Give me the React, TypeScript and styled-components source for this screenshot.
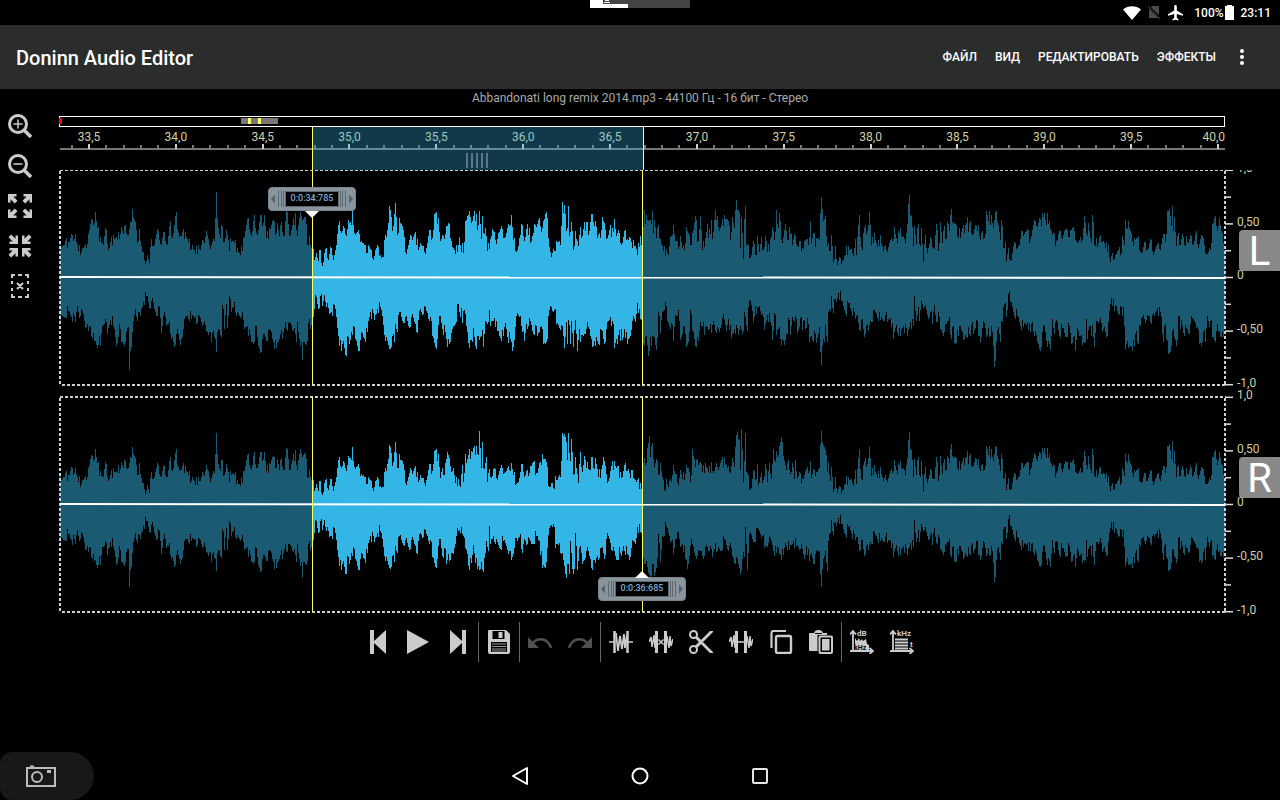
import React from "react";
import styled, { createGlobalStyle } from "styled-components";

const GlobalStyle = createGlobalStyle`
  * { box-sizing: border-box; }
  body { margin: 0; background: #000; font-family: Roboto, "Noto Sans", sans-serif; color: #fff; }
  button { font: inherit; color: inherit; background: none; border: 0; padding: 0; margin: 0; cursor: pointer; }
`;

/* Recorded levels: "position:level" pairs, three units per column, 337 is silence. */
const ZERO = 337;
const UNIT = 3;
const WIDTH = 1166;

type Point = [number, number];

/* Three consecutive stretches of the visible time range. */
const PART_STARTS = [0, 1140, 2310];

const LEFT_TOP = [
  "0:230 12:240 24:232 36:210 45:208 55:258 66:250 78:250 84:208 92:178 97:165 101:182 105:142 112:190 120:218 130:240 138:195 146:255 160:210 172:225 184:188 190:208 196:182 205:210 213:172 217:132 226:172 232:235 237:192 247:262 254:285 262:270 268:296 274:222 282:240 295:198 303:242 313:202 322:242 331:170 337:220 349:142 355:205 364:215 376:202 385:232 397:240 406:268 415:240 421:255 430:230 439:198 447:242 460:220 466:248 467:160 469:82 472:160 480:220 484:180 493:233 499:195 508:260 512:220 523:235 532:250 541:272 550:220 565:160 575:215 583:150 592:210 602:150 606:185 612:150 620:220 628:190 640:165 646:210 652:175 658:215 664:172 672:215 679:138 685:178 690:215 695:195 706:145 711:215 718:160 725:155 737:157 742:240 747:215 753:250 758:270 768:265 775:290 780:255 788:305 795:252 803:280 812:248 818:272 828:240 838:170 846:200 850:185 856:208 865:165 873:180 878:135 883:205 898:208 905:230 912:240 918:265 926:240 937:280 947:255 956:248 962:272 970:278 975:210 983:195 989:125 997:200 1006:115 1012:210 1018:160 1028:185 1036:262 1045:240 1054:215 1065:202 1070:240 1081:235 1092:262 1098:250 1110:195 1117:220 1124:147 1134:160 1142:228 1150:215",
  "20:185 28:178 35:230 46:268 58:218 64:262 67:235 70:265 76:170 85:150 91:158 97:170 103:138 107:170 109:148 113:196 118:138 124:222 127:155 132:208 137:190 143:258 150:222 157:192 167:225 175:205 187:192 194:220 200:205 208:185 214:152 220:225 233:255 240:210 247:180 254:230 260:192 268:190 272:235 280:205 287:180 298:160 302:185 310:170 319:143 326:220 334:278 342:260 350:228 360:240 367:113 370:145 373:122 380:200 385:125 389:215 394:172 401:255 405:200 416:245 421:188 426:215 433:172 437:198 442:172 446:210 454:147 460:172 467:168 473:220 480:220 487:157 496:195 504:210 511:180 515:218 523:162 529:215 538:205 545:240 556:195 562:222 568:218 573:232 580:225 587:245 592:272 600:215 607:250 613:135 616:178 619:150 626:168 634:178 637:138 641:205 644:165 649:220 655:182 660:222 671:260 680:252 685:270 693:215 700:182 706:230 715:252 721:215 727:250 733:255 739:187 746:205 751:242 757:205 767:153 773:232 781:155 788:255 795:220 802:178 806:220 814:165 818:222 826:135 829:165 832:155 838:198 845:180 854:152 865:170 871:225 877:158 883:190 889:105 895:135 898:145 901:250 904:157 910:282 913:162 916:123 920:245 925:240 931:280 940:228 947:270 953:215 959:262 964:218 970:255 977:215 983:262 992:222 997:188 1003:225 1009:135 1014:190 1018:145 1025:225 1036:178 1041:225 1048:188 1053:205 1057:240 1066:215 1075:248 1080:228 1088:250 1094:228 1105:240 1111:170 1115:235 1123:205 1126:248 1130:220 1138:225 1144:98 1147:132 1150:170 1157:155 1160:215 1165:235",
  "0:258 4:212 10:295 15:245 22:300 32:280 38:290 45:270 55:245 68:265 75:222 79:270 83:218 88:150 91:218 97:255 101:205 107:180 112:200 118:142 125:240 133:205 139:235 141:208 143:248 151:210 160:258 170:255 177:235 187:230 193:188 201:235 207:205 211:190 215:215 222:222 230:205 235:118 238:90 242:150 246:188 250:245 253:185 259:238 264:178 270:245 274:190 280:293 286:212 292:265 298:238 304:222 313:252 319:178 326:258 331:172 337:235 343:185 348:222 353:172 358:198 364:132 368:172 376:178 383:215 388:190 391:220 397:190 403:205 406:180 412:158 416:202 421:168 427:212 439:183 445:182 450:225 457:200 466:207 469:138 475:170 478:138 481:180 484:150 490:190 499:138 506:182 511:225 515:165 520:250 525:232 530:288 536:250 542:288 550:245 557:235 569:240 576:198 590:198 600:222 608:195 615:170 620:185 629:160 633:185 638:145 643:145 648:180 653:145 657:168 667:210 679:230 688:198 693:218 705:192 715:218 721:195 733:200 743:235 755:232 763:155 769:205 776:175 783:232 788:150 793:242 799:220 803:248 812:212 820:230 827:250 834:240 841:293 848:265 857:270 865:255 872:272 878:215 883:240 886:165 890:190 894:168 901:200 907:230 913:220 923:220 936:262 946:232 955:250 961:222 968:258 980:245 989:252 1000:208 1006:232 1013:140 1018:133 1023:185 1028:123 1030:198 1033:158 1039:245 1045:205 1050:240 1056:208 1063:240 1068:215 1075:235 1084:215 1090:238 1099:198 1103:238 1114:210 1122:240 1133:268 1141:255 1147:178 1155:153 1160:185 1168:160 1175:200 1180:235 1190:245",
];
const LEFT_BOTTOM = [
  "0:470 10:455 25:435 35:455 45:470 52:420 60:450 68:435 78:485 85:495 90:480 97:518 104:525 112:548 117:510 121:540 128:480 135:460 142:505 152:462 160:480 170:540 178:475 184:530 196:530 204:485 207:530 209:613 211:555 217:500 226:430 232:465 240:450 250:408 260:390 270:430 275:405 283:430 292:450 298:425 304:502 310:450 320:482 328:465 335:520 344:545 350:505 360:537 370:490 380:450 395:460 406:450 412:472 418:450 430:475 440:495 448:500 453:528 460:495 466:520 469:560 472:500 476:490 484:515 488:418 493:490 499:415 502:488 508:390 514:440 523:410 530:450 545:450 552:490 561:480 573:528 583:530 587:480 594:540 604:558 612:505 622:525 632:492 640:530 650:548 660:505 668:520 676:470 683:495 692:472 700:495 708:530 712:470 718:520 724:530 727:583 730:530 742:525 747:460 752:490 758:445 762:430 767:388 775:430 782:392 788:420 794:388 800:425 808:445 814:440 826:430 835:512 844:557 850:525 859:570 862:510 868:535 875:500 880:480 887:520 899:555 905:500 914:520 921:500 930:440 943:462 952:430 960:425 967:450 977:525 989:550 998:510 1003:530 1007:475 1012:500 1018:440 1027:465 1036:455 1048:488 1054:455 1065:475 1073:502 1079:435 1090:445 1100:435 1105:460 1111:455 1117:512 1127:545 1133:520 1138:450",
  "0:450 8:490 16:500 21:545 26:520 32:530 40:480 47:475 53:415 60:455 64:428 68:472 73:432 80:480 88:548 96:530 100:488 109:550 114:510 118:522 127:492 131:545 137:465 142:475 149:432 152:480 163:458 172:495 181:518 190:510 197:472 203:515 211:520 218:555 226:485 230:450 242:450 248:500 254:527 258:475 265:480 270:465 280:505 286:478 293:510 300:485 304:480 311:535 320:530 328:432 335:423 340:440 344:432 350:475 365:478 374:548 378:470 381:535 386:462 392:535 395:465 401:545 406:462 412:557 417:490 421:530 430:510 438:490 446:485 453:520 459:540 467:542 470:515 475:535 485:492 493:535 500:490 512:453 515:480 518:465 524:548 529:520 533:535 536:508 541:525 545:490 548:522 554:490 562:535 570:510 576:465 585:470 593:413 600:460 606:475 611:535 617:515 626:570 632:515 635:542 640:510 649:552 656:440 661:503 666:440 676:410 683:465 688:482 695:472 700:525 706:447 714:432 722:522 730:485 740:545 746:530 751:432 757:492 768:545 776:525 782:468 786:485 790:470 793:507 800:480 808:490 814:503 821:465 829:502 838:500 847:457 858:495 865:460 875:518 884:490 895:508 902:480 910:497 913:438 919:480 922:495 926:425 935:418 940:470 946:420 949:445 958:422 967:445 973:492 982:447 992:468 998:522 1003:442 1010:508 1018:485 1024:537 1033:537 1040:505 1048:462 1051:508 1058:455 1066:452 1073:502 1082:458 1086:492 1093:462 1097:490 1102:457 1108:530 1115:510 1120:528 1127:505 1130:533 1138:485 1142:560 1144:597 1148:540 1152:510 1154:530 1157:478 1162:528 1166:440",
  "0:435 4:390 10:443 15:400 19:410 25:382 34:405 47:443 55:412 65:435 75:460 82:447 91:495 96:460 103:515 108:480 114:495 122:465 135:440 150:462 160:465 167:447 172:470 182:458 191:520 198:478 210:510 219:480 232:510 240:470 250:482 253:390 258:465 264:423 269:465 274:405 283:425 294:460 301:440 307:475 313:418 319:470 325:440 331:490 343:500 350:475 358:455 363:520 370:480 374:532 384:510 390:480 398:500 404:520 411:518 416:485 422:510 427:470 430:505 439:463 446:510 451:530 457:488 466:488 470:515 475:488 481:510 485:480 490:540 494:605 499:530 505:485 511:530 515:465 526:412 530:455 535:385 541:410 551:440 562:450 571:480 580:485 592:470 601:498 606:470 613:510 622:530 631:555 637:500 643:480 653:545 661:552 668:460 673:505 680:462 688:512 697:487 706:515 718:480 724:535 730:515 737:555 743:487 750:510 757:538 765:530 769:460 773:520 780:480 784:510 788:478 794:545 799:465 808:465 817:500 824:485 833:510 838:435 844:397 853:435 860:420 864:448 870:420 877:450 881:425 886:550 890:535 895:548 903:540 912:540 918:495 924:535 930:480 940:447 950:462 958:452 965:475 972:450 982:427 993:455 999:530 1003:480 1010:520 1016:566 1024:540 1030:490 1034:515 1040:540 1046:452 1051:490 1054:462 1063:510 1068:487 1077:505 1082:475 1094:465 1102:485 1108:535 1115:540 1120:500 1126:530 1133:450 1138:485 1142:465 1148:515 1156:530 1160:495 1165:500 1172:515 1178:500 1190:500",
];
const RIGHT_TOP_MIDDLE =
  "0:258 10:250 16:215 22:180 30:222 40:230 46:275 55:262 61:285 67:220 70:270 76:188 80:215 85:190 95:178 103:162 106:190 110:162 115:190 118:117 124:228 127:150 131:230 139:195 143:270 149:232 155:258 161:232 170:258 178:238 188:228 197:242 209:235 214:213 220:250 236:272 242:240 248:218 254:255 263:235 272:222 280:212 290:245 300:212 307:188 318:210 328:287 334:275 340:288 346:252 350:265 361:255 367:125 373:127 378:150 382:205 385:123 390:208 394:143 401:250 406:195 415:275 421:182 427:242 433:192 438:230 442:210 450:235 455:195 460:230 467:200 475:255 484:232 490:195 498:248 505:268 512:238 523:208 530:228 540:240 547:255 556:215 565:232 571:258 577:235 590:272 600:275 606:292 609:215 614:200 617:220 622:170 628:132 632:195 637:155 643:225 650:202 655:250 661:215 667:255 673:295 680:262 685:285 692:262 700:220 706:248 713:270 721:235 727:262 740:220 748:240 752:272 757:173 763:202 767:225 773:202 782:210 788:240 797:215 806:242 814:212 820:245 832:225 842:215 853:200 863:228 868:240 877:198 883:225 889:130 892:122 898:145 901:235 904:113 910:270 916:125 920:240 932:292 941:235 946:265 953:218 956:280 965:245 970:265 977:217 983:272 989:215 994:262 1000:172 1004:205 1008:178 1014:190 1021:150 1027:152 1033:208 1040:235 1046:205 1052:248 1058:215 1063:262 1067:205 1072:258 1080:245 1087:260 1097:238 1105:245 1111:208 1115:258 1123:235 1130:240 1138:230 1144:117 1150:160 1157:175 1162:240 1166:210";
const RIGHT_BOTTOM_MIDDLE =
  "0:438 8:490 14:465 20:515 25:485 31:502 40:485 48:430 56:415 61:420 65:402 70:430 75:465 82:485 86:520 95:510 101:458 107:510 112:528 119:533 125:508 131:537 135:480 140:445 145:475 149:400 152:455 161:430 167:455 180:468 190:445 200:460 208:475 215:502 223:465 232:445 240:425 248:482 253:440 262:455 275:455 288:430 297:445 308:525 316:525 323:465 330:400 340:395 347:465 358:450 365:485 373:520 379:557 382:515 388:545 392:445 397:528 404:530 407:420 412:533 418:465 428:515 440:475 450:500 457:533 465:510 472:490 478:497 485:465 491:480 493:500 500:440 505:430 511:452 518:475 529:502 540:480 544:490 551:460 562:485 568:502 575:465 586:455 593:402 600:418 606:430 611:495 617:515 625:540 634:550 640:515 643:550 650:525 655:425 661:508 668:430 678:400 688:430 695:445 701:485 707:440 712:418 720:462 728:455 737:500 743:530 750:460 757:455 763:480 773:490 784:475 793:490 800:458 808:475 818:492 826:450 832:475 842:475 853:440 862:470 868:460 878:490 886:515 895:515 901:545 908:500 913:492 917:402 922:533 927:425 940:448 955:410 968:430 974:465 985:450 995:445 1000:475 1008:482 1014:465 1020:488 1030:488 1037:450 1048:472 1060:445 1070:460 1082:470 1093:500 1100:460 1108:505 1115:480 1123:515 1130:475 1138:475 1144:583 1150:500 1157:475 1162:535 1166:445";

function readPart(text: string, start: number, gain = 1): Point[] {
  return text.split(" ").map((pair) => {
    const [pos, level] = pair.split(":").map(Number);
    return [pos + start, ZERO + (level - ZERO) * gain];
  });
}

const readTrack = (parts: string[], gains = [1, 1, 1]) =>
  parts.flatMap((part, i) => readPart(part, PART_STARTS[i], gains[i]));

const tracks = {
  leftTop: readTrack(LEFT_TOP),
  leftBottom: readTrack(LEFT_BOTTOM),
  rightTop: readTrack([LEFT_TOP[0], RIGHT_TOP_MIDDLE, LEFT_TOP[2]], [0.84, 1, 0.88]),
  rightBottom: readTrack([LEFT_BOTTOM[0], RIGHT_BOTTOM_MIDDLE, LEFT_BOTTOM[2]], [0.89, 1, 0.86]),
};

/* One height per column: a ripple between the recorded points, the points themselves kept exact. */
function columns(points: Point[]): number[] {
  const out: number[] = [];
  let i = 0;
  for (let x = 0; x < WIDTH - 1; x++) {
    const pos = x * UNIT + 1;
    while (i < points.length - 2 && points[i + 1][0] < pos) i++;
    const [x0, y0] = points[i];
    const [x1, y1] = points[i + 1];
    const t = Math.min(1, Math.max(0, (pos - x0) / (x1 - x0)));
    const height = Math.abs(y0 + (y1 - y0) * t - ZERO) / UNIT;
    const ripple = ((x * 7919) % 13) - 7;
    out.push(Math.max(4, Math.round(height + ripple)));
  }
  points.forEach(([pos, level]) => {
    const x = Math.floor(pos / UNIT);
    if (x < out.length) out[x] = Math.round(Math.abs(level - ZERO) / UNIT);
  });
  return out;
}

function wavePath(top: Point[], bottom: Point[]) {
  const a = columns(top);
  const b = columns(bottom);
  let d = "M1 108";
  a.forEach((v, x) => { d += `V${108 - v}H${x + 2}`; });
  d += "V108";
  for (let x = b.length - 1; x >= 0; x--) d += `V${109 + b[x]}H${x + 1}`;
  return d + "Z";
}

const Page = styled.div`
  min-height: 100vh; display: flex; flex-direction: column; background: #000;
`;
const StatusBar = styled.div`
  position: relative; height: 25px; display: flex; align-items: center; justify-content: flex-end;
  padding-right: 9px; font-size: 12px; font-weight: 500;
  svg { display: block; }
`;
const StatusIcons = styled.div`display: flex; align-items: center; gap: 6px; margin-right: 11px;`;
const Clock = styled.span`margin-left: 6px;`;
const Loader = styled.div`
  position: absolute; top: 0; left: 50%; margin-left: -50px; width: 100px; height: 8px; background: #444;
`;
const AppBar = styled.header`
  height: 64px; background: #2b2d2c; display: flex; align-items: center; justify-content: space-between;
  padding: 0 16px;
`;
const Title = styled.h1`margin: 0; padding-top: 2px; font-size: 20px; font-weight: 500; line-height: 24px;`;
const Menu = styled.nav`
  display: flex; align-items: center; gap: 18px; font-size: 12px; font-weight: 500;
`;
const MenuButton = styled.button`height: 48px;`;
const MoreButton = styled.button`
  width: 16px; height: 48px; display: grid; place-items: center; margin-right: 14px;
`;
const FileInfo = styled.div`
  height: 17px; line-height: 18px; font-size: 12px; color: #aaa; text-align: center;
`;
const Editor = styled.main`display: grid; grid-template-columns: 59px minmax(0, 1fr);`;
const SideTools = styled.div`display: flex; flex-direction: column;`;
const ToolButton = styled.button`
  width: 40px; height: 40px; display: grid; place-items: center; color: #ccc;
  &:disabled { color: #505050; cursor: default; }
  svg { display: block; }
`;
const Tracks = styled.div`display: flex; flex-direction: column; padding-top: 10px;`;
const Overview = styled.div`
  height: 11px; margin-right: 55px; border: 1px solid #fff;
  svg { display: block; overflow: visible; }
`;
const Ruler = styled.div`
  height: 43px; margin-right: 55px;
  svg { display: block; overflow: visible; }
  text { font-size: 12px; fill: #cfcfa9; }
`;
const Channel = styled.section<{ $cut?: boolean }>`
  position: relative; display: grid; grid-template-columns: minmax(0, 1fr) 55px;
  height: ${(p) => (p.$cut ? 216 : 217)}px;
  & + & { margin-top: 10px; }
`;
const Chart = styled.div`
  position: relative;
  > svg { display: block; overflow: visible; }
`;
const Scale = styled.svg<{ $cut?: boolean }>`
  display: block; overflow: visible;
  clip-path: ${(p) => (p.$cut ? "inset(0 0 -8px 0)" : "none")};
  text { font-size: 12px; fill: #cfcfa9; }
`;
const Badge = styled.span`
  position: absolute; right: 0; bottom: 115px; width: 41px; height: 41px; border-radius: 4px 0 0 4px;
  background: #888; font-size: 40px; line-height: 44px; text-align: center;
`;
const Marker = styled.button<{ $at: number; $top: number }>`
  position: absolute; left: ${(p) => (p.$at / WIDTH) * 100}%; top: ${(p) => p.$top}px;
  width: 88px; height: 24px; margin-left: -44px; border-radius: 4px; background: #89949d;
  border: 1px solid #7a858e; display: flex; align-items: center; justify-content: center;
  > svg { display: block; }
`;
const MarkerTime = styled.span`
  width: 54px; height: 16px; background: #000; border: 1px solid #5d686f; color: #7fa9cf;
  font-size: 9px; font-weight: 500; line-height: 13px; text-align: center;
`;
const Pointer = styled.svg<{ $below?: boolean }>`
  position: absolute; left: 36px; ${(p) => (p.$below ? "top: 23px" : "top: -8px")};
`;
const Toolbar = styled.div`display: flex; justify-content: center; margin-top: 9px;`;
const Divider = styled.span`width: 1px; height: 40px; background: #666;`;
const SystemNav = styled.footer`
  margin-top: auto; height: 48px; display: grid; grid-template-columns: 1fr auto 1fr; align-items: center;
`;
const CameraButton = styled.button`
  width: 94px; height: 48px; background: #181818; border-radius: 12px 24px 24px 12px;
  display: flex; align-items: center; padding-left: 26px;
`;
const NavButtons = styled.div`display: flex;`;
const NavButton = styled.button`width: 120px; height: 48px; display: grid; place-items: center;`;

const Icon = ({ children }: { children: React.ReactNode }) => (
  <svg width="24" height="24" viewBox="0 0 24 24" fill="none" stroke="currentColor" strokeWidth="2" aria-hidden>{children}</svg>
);
const Solid = ({ d }: { d: string }) => <path d={d} fill="currentColor" stroke="none" />;
const Label = ({ x, y, children }: { x: number; y: number; children: string }) => (
  <text x={x} y={y} fontSize="8" fontWeight="700" fill="currentColor" stroke="none">{children}</text>
);

const ARROW = "M0 0H8.500V2.500H5.300L9.500 6.800 6.800 9.500 2.500 5.300V8.500H0Z";
const corners = (inward: boolean) =>
  [[1, 1], [-1, 1], [1, -1], [-1, -1]].map(([sx, sy], i) => (
    <g key={i} transform={`translate(12 12) scale(${sx} ${sy}) translate(-12 -12)` + (inward ? " rotate(180 5 5)" : "")}>
      <Solid d={ARROW} />
    </g>
  ));

const Lens = () => (
  <>
    <circle cx="10" cy="10" r="8.500" strokeWidth="3" />
    <path d="M16 16L23 23" strokeWidth="3.500" />
  </>
);

const SideWaves = () => (
  <>
    <path d="M0 12L2 7L3 17L5 5L6 18M18 6L20 18L21 6L22 16L24 9" strokeWidth="1.500" />
    <path d="M7.500 1V23M16.500 1V23" strokeWidth="3" />
  </>
);

const Axes = () => <path d="M3 1V21H23M0 4.500L3 1L6 4.500M19.500 18L23 21L19.500 24M0 21H3" strokeWidth="1.800" />;

function Track({ id, top, bottom, cut }: { id: string; top: Point[]; bottom: Point[]; cut?: boolean }) {
  const d = wavePath(top, bottom);
  const edge = { stroke: "#cfcfcf", strokeDasharray: "3 2" };
  return (
    <svg width="100%" height={cut ? 216 : 217} viewBox={`0 ${cut ? 1 : 0} ${WIDTH} ${cut ? 216 : 217}`} preserveAspectRatio="none">
      <clipPath id={id}><rect x="254" y="0" width="329" height="217" /></clipPath>
      <g shapeRendering="crispEdges">
        <path d={d} fill="#1a5a72" />
        <path d={d} fill="#33b5e5" clipPath={`url(#${id})`} />
        <line x1="1" x2="1167" y1={cut ? 1.5 : 1} y2={cut ? 1.5 : 1} strokeWidth={cut ? 1 : 2} {...edge} />
        <line x1="3" x2="1167" y1="216" y2="216" strokeWidth="2" {...edge} />
        <line x1="1" x2="1" y1="2" y2="217" strokeWidth="2" {...edge} />
        <line x1="1166" x2="1166" y1="2" y2="217" strokeWidth="2" {...edge} />
      </g>
      <line x1="1" x2="1166" y1="108" y2="109" stroke="#fff" strokeWidth="2" />
      <path d="M253.500 1V216M583.500 1V216" stroke="#ffff66" />
    </svg>
  );
}

function Levels({ cut }: { cut?: boolean }) {
  const labels = ["1,0", "0,50", "0", "-0,50", "-1,0"];
  return (
    <Scale $cut={cut} width="55" height={cut ? 216 : 217} viewBox={`0 ${cut ? 1 : 0} 55 ${cut ? 216 : 217}`}>
      {Array.from({ length: 9 }, (_, i) => (
        <line key={i} x1="0" x2={i % 2 ? 6 : 8} y1={1.3 + i * 26.8} y2={1.3 + i * 26.8} stroke="#ddd" strokeWidth="1.500" />
      ))}
      {labels.map((t, i) => <text key={t} x="12" y={Math.round(3 + i * 53.7)}>{t}</text>)}
    </Scale>
  );
}

const Grip = ({ flip }: { flip?: boolean }) => (
  <svg width="16" height="16" viewBox="0 0 16 16" aria-hidden>
    <g transform={flip ? "translate(16 0) scale(-1 1)" : undefined}>
      <path d="M6 3.500V12.500L2 8Z" fill="#56626b" />
      <path d="M9.500 0V16M12.500 0V16M14.500 0V16" stroke="#5d6972" />
    </g>
  </svg>
);

const seconds = Array.from({ length: 14 }, (_, i) => (33.5 + i * 0.5).toFixed(1).replace(".", ","));
const pct = (x: number) => `${(x / WIDTH) * 100}%`;

export default function App() {
  return (
    <Page>
      <GlobalStyle />
      <StatusBar>
        <Loader>
          <svg width="100" height="8" shapeRendering="crispEdges" aria-hidden>
            <path d="M0 0H13V4H38V8H0Z" fill="#fff" />
            <path d="M15 0H19V1H15ZM14 2H20V3H14Z" fill="#fff" />
          </svg>
        </Loader>
        <StatusIcons>
          <svg width="18" height="14" viewBox="0 0 18 14"><path d="M0 3.500C5 -.7 13 -.7 18 3.500L9 14Z" fill="#fff" /></svg>
          <svg width="15" height="15" viewBox="0 0 15 15"><path d="M5 1H12V13H2V4Z" fill="#4c4c4c" /><path d="M0 0L14 14" stroke="#000" strokeWidth="2.500" /><path d="M1 1L13 14" stroke="#4c4c4c" /></svg>
          <svg width="15" height="16" viewBox="0 0 15 16"><path d="M7.500 0C8.300 0 8.800 .7 8.800 1.500V5.500L15 9.300V10.800L8.800 9V13L10.500 14.300V15.500L7.500 14.700 4.500 15.500V14.300L6.200 13V9L0 10.800V9.300L6.200 5.500V1.500C6.200 .7 6.700 0 7.500 0Z" fill="#fff" /></svg>
        </StatusIcons>
        <span>100%</span>
        <svg width="11" height="15" viewBox="0 0 11 15"><path d="M1 1H3V0H8V1H10V15H1Z" fill="#fff" /></svg>
        <Clock>23:11</Clock>
      </StatusBar>
      <AppBar>
        <Title>Doninn Audio Editor</Title>
        <Menu>
          <MenuButton>ФАЙЛ</MenuButton>
          <MenuButton>ВИД</MenuButton>
          <MenuButton>РЕДАКТИРОВАТЬ</MenuButton>
          <MenuButton>ЭФФЕКТЫ</MenuButton>
          <MoreButton aria-label="Ещё">
            <svg width="4" height="16" viewBox="0 0 4 16" fill="#fff"><circle cx="2" cy="2" r="2" /><circle cx="2" cy="8" r="2" /><circle cx="2" cy="14" r="2" /></svg>
          </MoreButton>
        </Menu>
      </AppBar>
      <FileInfo>Abbandonati long remix 2014.mp3 - 44100 Гц - 16 бит - Стерео</FileInfo>
      <Editor>
        <SideTools>
          <ToolButton aria-label="Увеличить"><Icon><Lens /><path d="M10 5.500V14.500M5.500 10H14.500" strokeWidth="1.500" /></Icon></ToolButton>
          <ToolButton aria-label="Уменьшить"><Icon><Lens /><path d="M5.500 10H14.500" strokeWidth="1.500" /></Icon></ToolButton>
          <ToolButton aria-label="Развернуть"><Icon>{corners(false)}</Icon></ToolButton>
          <ToolButton aria-label="Свернуть"><Icon>{corners(true)}</Icon></ToolButton>
          <ToolButton aria-label="Снять выделение"><Icon><path d="M4 4V1H7M10 1H14M17 1H20V4M20 7V10M20 14V17M20 20V23H17M14 23H10M7 23H4V20M4 17V14M4 10V7M9 9L15 15M15 9L9 15" /></Icon></ToolButton>
        </SideTools>
        <Tracks>
          <Overview>
            <svg width="100%" height="9" shapeRendering="crispEdges" aria-hidden>
              <rect x={pct(181)} y="1" width={pct(37)} height="6" fill="#777" />
              <rect x={pct(188)} y="1" width="3" height="6" fill="#ff6" />
              <rect x={pct(198)} y="1" width="3" height="6" fill="#ff6" />
              <rect x="-1" y="1" width="3" height="6" fill="#f00" />
            </svg>
          </Overview>
          <Ruler>
            <svg width="100%" height="43">
              <g shapeRendering="crispEdges" stroke="#777" strokeWidth="2">
                <line x1="1" x2="100%" y1="22" y2="22" />
                {Array.from({ length: 67 }, (_, i) => (
                  <line key={i} x1={pct(12.5 + i * 17.37)} x2={pct(12.5 + i * 17.37)} y1={i % 5 === 1 ? 17 : 18} y2="22" stroke={i % 5 === 1 ? "#ccc" : "#777"} />
                ))}
              </g>
              {seconds.map((s, i) => (
                <text key={s} x={i === 13 ? "100%" : pct(30 + i * 86.85)} y="14" textAnchor={i === 13 ? "end" : "middle"}>{s}</text>
              ))}
              <g shapeRendering="crispEdges">
                <rect x={pct(254)} y="0" width={pct(330)} height="43" fill="#33b5e5" fillOpacity=".32" />
                <rect x={pct(253)} y="0" width="1" height="43" fill="#ff6" />
                <rect x={pct(584)} y="0" width="1" height="43" fill="#ff6" />
                {[407, 412, 417, 422, 427].map((x) => <rect key={x} x={pct(x)} y="26" width="2" height="15" fill="#5c7683" />)}
              </g>
            </svg>
          </Ruler>
          <Channel $cut aria-label="Левый канал">
            <Chart>
              <Track id="left-selection" top={tracks.leftTop} bottom={tracks.leftBottom} cut />
              <Marker $at={253} $top={17}>
                <Grip /><MarkerTime>0:0:34:785</MarkerTime><Grip flip />
                <Pointer $below width="14" height="8"><path d="M0 0H14L7 7Z" fill="#fff" /></Pointer>
              </Marker>
            </Chart>
            <Levels cut />
            <Badge>L</Badge>
          </Channel>
          <Channel aria-label="Правый канал">
            <Chart>
              <Track id="right-selection" top={tracks.rightTop} bottom={tracks.rightBottom} />
              <Marker $at={583} $top={181}>
                <Grip /><MarkerTime>0:0:36:685</MarkerTime><Grip flip />
                <Pointer width="14" height="8"><path d="M0 8H14L7 1Z" fill="#fff" /></Pointer>
              </Marker>
            </Chart>
            <Levels />
            <Badge>R</Badge>
          </Channel>
        </Tracks>
      </Editor>
      <Toolbar>
        <ToolButton aria-label="В начало"><Icon><Solid d="M4 0H8V11L20 0V24L8 13V24H4Z" /></Icon></ToolButton>
        <ToolButton aria-label="Воспроизвести"><Icon><Solid d="M1 0L23 12 1 24Z" /></Icon></ToolButton>
        <ToolButton aria-label="В конец"><Icon><Solid d="M4 0L16 11V0H20V24H16V13L4 24Z" /></Icon></ToolButton>
        <Divider />
        <ToolButton aria-label="Сохранить">
          <Icon>
            <Solid d="M2 0H19L23 4V22Q23 24 21 24H3Q1 24 1 22V1Q1 0 2 0Z" />
            <path d="M5.500 1H17.500V9H5.500ZM4 12H20V22H4Z" fill="#000" stroke="none" />
            <path d="M13.500 2V8" strokeWidth="4" />
            <path d="M5 14H19M5 16.500H19M5 19H19M5 21H19" stroke="#999" strokeWidth="1" />
          </Icon>
        </ToolButton>
        <Divider />
        <ToolButton aria-label="Отменить" disabled><Icon><Solid d="M0 7V18H11Z" /><path d="M5 13C10 7 20 8 23 18" strokeWidth="2.500" /></Icon></ToolButton>
        <ToolButton aria-label="Повторить" disabled><Icon><Solid d="M24 7V18H13Z" /><path d="M19 13C14 7 4 8 1 18" strokeWidth="2.500" /></Icon></ToolButton>
        <Divider />
        <ToolButton aria-label="Выделить всё">
          <Icon>
            <path d="M0 12H5M19 12H24" strokeWidth="1.500" />
            <path d="M5.500 1V23M18.500 1V23" strokeWidth="2.500" />
            <path d="M7 3L9 21L11 6L13 19L15 4L16 18L18 5" strokeWidth="1.800" />
          </Icon>
        </ToolButton>
        <ToolButton aria-label="Удалить"><Icon><SideWaves /><path d="M9.500 9.500L14.500 14.500M14.500 9.500L9.500 14.500" strokeWidth="1.500" /></Icon></ToolButton>
        <ToolButton aria-label="Вырезать">
          <Icon>
            <circle cx="4.500" cy="4.500" r="3.500" />
            <circle cx="4.500" cy="19.500" r="3.500" />
            <path d="M7 7L12 12L7 17" strokeWidth="3" />
            <Solid d="M10 12L21 1H24V2L13 13ZM10 12L21 23H24V22L13 11Z" />
          </Icon>
        </ToolButton>
        <ToolButton aria-label="Обрезать"><Icon><SideWaves /><path d="M9 12H15" strokeWidth="1.500" /></Icon></ToolButton>
        <ToolButton aria-label="Копировать"><Icon><path d="M2.500 18V3Q2.500 1 4.500 1H17" strokeWidth="2.200" /><rect x="7" y="6" width="15" height="17" rx="1.500" strokeWidth="2.400" /></Icon></ToolButton>
        <ToolButton aria-label="Вставить">
          <Icon>
            <Solid d="M1 3H5Q6 0 9 0H10Q13 0 14 3H18V21H1Q0 21 0 20V4Q0 3 1 3Z" />
            <path d="M6 3.500H13" stroke="#000" strokeWidth="1" />
            <rect x="8.500" y="5" width="15.500" height="19" fill="#000" stroke="none" />
            <rect x="10.500" y="6.500" width="12.500" height="16.500" rx="1" />
            <Solid d="M13 9H20.500V20.500H13Z" />
          </Icon>
        </ToolButton>
        <Divider />
        <ToolButton aria-label="Спектр">
          <Icon>
            <Axes />
            <Label x={7} y={6}>dB</Label>
            <Solid d="M5 20V8L7 11 9 8 10 11 12 9 13 11 16 9 17 14 19 15V20Z" />
            <text x="4" y="20" fontSize="7" fontWeight="700" fill="#000" stroke="none">kHz</text>
          </Icon>
        </ToolButton>
        <ToolButton aria-label="Спектрограмма">
          <Icon>
            <Axes />
            <Label x={7} y={6}>kHz</Label>
            <path d="M5 9.500H18M5 12.500H18M5 15.500H18M5 18.500H18" strokeWidth="2" />
            <Label x={20} y={17}>t</Label>
          </Icon>
        </ToolButton>
      </Toolbar>
      <SystemNav>
        <CameraButton aria-label="Снимок экрана">
          <svg width="30" height="22" viewBox="0 0 30 22" fill="none" stroke="#bbb" strokeWidth="2"><rect x="1" y="3" width="28" height="18" /><circle cx="11" cy="12" r="5" /><path d="M21 6.500H25" strokeWidth="3" /><path d="M4 1.500H8" /></svg>
        </CameraButton>
        <NavButtons>
          <NavButton aria-label="Назад"><svg width="18" height="20" viewBox="0 0 18 20" fill="none" stroke="#fff" strokeWidth="2" strokeLinejoin="round"><path d="M16 2V18L2 10Z" /></svg></NavButton>
          <NavButton aria-label="Домой"><svg width="18" height="18" fill="none" stroke="#fff" strokeWidth="2"><circle cx="9" cy="9" r="7.500" /></svg></NavButton>
          <NavButton aria-label="Недавние"><svg width="16" height="16" fill="none" stroke="#e6e6e6" strokeWidth="2"><rect x="1" y="1" width="14" height="14" rx="1" /></svg></NavButton>
        </NavButtons>
      </SystemNav>
    </Page>
  );
}
